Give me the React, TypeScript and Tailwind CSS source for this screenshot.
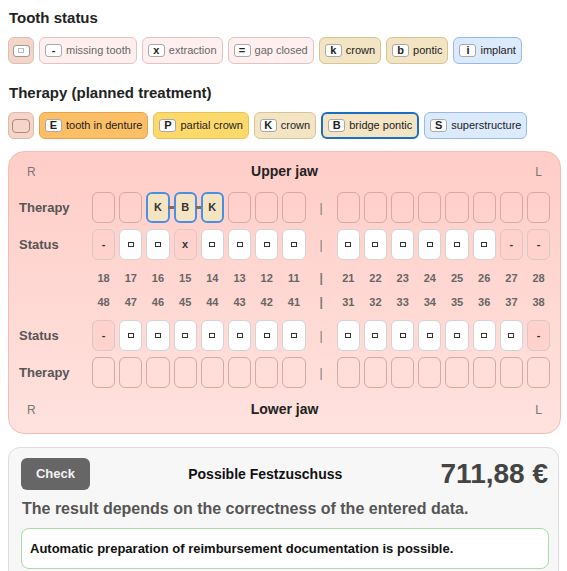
import React from "react";

type Chip = { key: string; label: string; tone: string; keyClass?: string; textClass?: string };

const statusChips: Chip[] = [
  { key: "-", label: "missing tooth", tone: "bg-[#fff0ef] border-[#e3c3c1]", textClass: "text-[#666]" },
  { key: "x", label: "extraction", tone: "bg-[#fff0ef] border-[#e3c3c1]", textClass: "text-[#666]" },
  { key: "=", label: "gap closed", tone: "bg-[#fff0ef] border-[#e3c3c1]", textClass: "text-[#666]" },
  { key: "k", label: "crown", tone: "bg-[#f3e4c3] border-[#d8c394]", textClass: "text-[#222]" },
  { key: "b", label: "pontic", tone: "bg-[#f3e4c3] border-[#d8c394]", textClass: "text-[#222]" },
  { key: "i", label: "implant", tone: "bg-[#dbeafd] border-[#94bbec]", textClass: "text-[#222]" },
];

const therapyChips: Chip[] = [
  { key: "E", label: "tooth in denture", tone: "bg-[#fdbf66] border-[#e2a54b]", textClass: "text-[#222]" },
  { key: "P", label: "partial crown", tone: "bg-[#fdd96c] border-[#e6c357]", textClass: "text-[#222]" },
  { key: "K", label: "crown", tone: "bg-[#f3e4c3] border-[#d8c394]", textClass: "text-[#222]" },
  { key: "B", label: "bridge pontic", tone: "bg-[#f3e4c3] border-[#1b6fc2] border-2", textClass: "text-[#222]" },
  { key: "S", label: "superstructure", tone: "bg-[#dbeafd] border-[#94bbec]", textClass: "text-[#222]" },
];

function LegendChip({ chip }: { chip: Chip }) {
  const bordered = chip.tone.includes("border-2") ? "" : "border";
  return (
    <div
      className={`h-[27px] flex items-center gap-[4px] pl-[5px] pr-[5px] rounded-[6px] ${bordered} ${chip.tone}`}
    >
      <span className="w-[17px] h-[13px] rounded-[3px] border border-[#a9a9a9] bg-white flex items-center justify-center text-[11px] leading-none font-bold text-[#222]">
        {chip.key}
      </span>
      <span className={`text-[11px] leading-none ${chip.textClass}`}>{chip.label}</span>
    </div>
  );
}

function TinySquare() {
  return <span className="block w-[6px] h-[5px] border border-[#333] bg-white" />;
}

type StatusKind = "sq" | "-" | "x";

function StatusBox({ kind }: { kind: StatusKind }) {
  if (kind === "sq") {
    return (
      <div className="h-[31px] rounded-[6px] border border-[#d3d3d3] bg-white flex items-center justify-center">
        <TinySquare />
      </div>
    );
  }
  return (
    <div className="h-[31px] rounded-[6px] border border-[#d8c8c6] bg-[#ffd2cd] flex items-center justify-center text-[11px] font-bold text-[#333]">
      {kind}
    </div>
  );
}

type TherapyCell = { code?: string; bridgeRight?: boolean };

function TherapyBox({ cell }: { cell: TherapyCell }) {
  if (!cell.code) {
    return <div className="h-[31px] rounded-[6px] border border-[#d6aaa4]" />;
  }
  return (
    <div className="relative h-[31px]">
      <div className="h-[31px] rounded-[6px] border-2 border-[#4a90e2] bg-[#f4e4c2] flex items-center justify-center text-[11px] font-bold text-[#333]">
        {cell.code}
      </div>
      {cell.bridgeRight && (
        <span className="absolute top-[14px] left-[22px] w-[7px] h-[3px] bg-[#7f6e5e]" />
      )}
    </div>
  );
}

function Separator({ bold }: { bold?: boolean }) {
  return (
    <div className={`flex items-center justify-center text-[12px] text-[#777] ${bold ? "font-bold" : ""}`}>|</div>
  );
}

const rowGrid = "grid grid-cols-[69px_repeat(17,23.2px)] gap-x-[4px]";

function RowLabel({ text }: { text: string }) {
  return <div className="flex items-center text-[13px] font-bold text-[#555]">{text}</div>;
}

function StatusRow({ left, right }: { left: StatusKind[]; right: StatusKind[] }) {
  return (
    <div className={rowGrid}>
      <RowLabel text="Status" />
      {left.map((k, i) => (
        <StatusBox key={`l${i}`} kind={k} />
      ))}
      <Separator />
      {right.map((k, i) => (
        <StatusBox key={`r${i}`} kind={k} />
      ))}
    </div>
  );
}

function TherapyRow({ left, right }: { left: TherapyCell[]; right: TherapyCell[] }) {
  return (
    <div className={rowGrid}>
      <RowLabel text="Therapy" />
      {left.map((c, i) => (
        <TherapyBox key={`l${i}`} cell={c} />
      ))}
      <Separator />
      {right.map((c, i) => (
        <TherapyBox key={`r${i}`} cell={c} />
      ))}
    </div>
  );
}

function NumberRow({ left, right }: { left: number[]; right: number[] }) {
  return (
    <div className={`${rowGrid} h-[24px]`}>
      <div />
      {left.map((n) => (
        <div key={n} className="flex items-center justify-center text-[11px] font-bold text-[#666]">
          {n}
        </div>
      ))}
      <Separator bold />
      {right.map((n) => (
        <div key={n} className="flex items-center justify-center text-[11px] font-bold text-[#666]">
          {n}
        </div>
      ))}
    </div>
  );
}

function JawHeader({ title }: { title: string }) {
  return (
    <div className="grid grid-cols-3 items-center h-[20px] px-[8px]">
      <span className="text-[12px] text-[#777]">R</span>
      <span className="text-center text-[14px] font-bold text-[#222]">{title}</span>
      <span className="text-right text-[12px] text-[#777]">L</span>
    </div>
  );
}

const empty8: TherapyCell[] = Array.from({ length: 8 }, () => ({}));

export default function App() {
  const upperTherapyLeft: TherapyCell[] = [
    {},
    {},
    { code: "K", bridgeRight: true },
    { code: "B", bridgeRight: true },
    { code: "K" },
    {},
    {},
    {},
  ];

  return (
    <div className="w-[567px] h-[571px] overflow-hidden bg-white px-2 pt-2 font-['Liberation_Sans',Arial,sans-serif]">
      <h2 className="h-[20px] flex items-center pl-[1px] text-[15px] font-bold text-[#222]">Tooth status</h2>
      <div className="mt-[9px] flex gap-[5px]">
        <div className="w-[26px] h-[27px] rounded-[6px] border border-[#d8c0b6] bg-[#f5d5c8] flex items-center justify-center">
          <span className="w-[17px] h-[12px] rounded-[3px] border border-[#9a9a9a] bg-white flex items-center justify-center">
            <span className="block w-[6px] h-[5px] border border-[#bbb]" />
          </span>
        </div>
        {statusChips.map((c) => (
          <LegendChip key={c.label} chip={c} />
        ))}
      </div>

      <h2 className="mt-[19px] h-[20px] flex items-center pl-[1px] text-[15px] font-bold text-[#222]">
        Therapy (planned treatment)
      </h2>
      <div className="mt-[9px] flex gap-[5px]">
        <div className="w-[26px] h-[27px] rounded-[6px] border border-[#d8bcb2] bg-[#f6d4c7] flex items-center justify-center">
          <span className="w-[18px] h-[14px] rounded-[4px] border-[1.5px] border-[#a88a86]" />
        </div>
        {therapyChips.map((c) => (
          <LegendChip key={c.label} chip={c} />
        ))}
      </div>

      <div className="mt-[12px] w-[553px] rounded-[16px] border border-[#f2bdb6] bg-gradient-to-b from-[#ffcdc7] to-[#ffe2de] px-[10px] pt-[9px] pb-[14px]">
        <JawHeader title="Upper jaw" />
        <div className="mt-[11px]">
          <TherapyRow left={upperTherapyLeft} right={empty8} />
        </div>
        <div className="mt-[6px]">
          <StatusRow
            left={["-", "sq", "sq", "x", "sq", "sq", "sq", "sq"]}
            right={["sq", "sq", "sq", "sq", "sq", "sq", "-", "-"]}
          />
        </div>
        <div className="mt-[6px]">
          <NumberRow left={[18, 17, 16, 15, 14, 13, 12, 11]} right={[21, 22, 23, 24, 25, 26, 27, 28]} />
          <NumberRow left={[48, 47, 46, 45, 44, 43, 42, 41]} right={[31, 32, 33, 34, 35, 36, 37, 38]} />
        </div>
        <div className="mt-[6px]">
          <StatusRow
            left={["-", "sq", "sq", "sq", "sq", "sq", "sq", "sq"]}
            right={["sq", "sq", "sq", "sq", "sq", "sq", "sq", "-"]}
          />
        </div>
        <div className="mt-[6px]">
          <TherapyRow left={empty8} right={empty8} />
        </div>
        <div className="mt-[11px]">
          <JawHeader title="Lower jaw" />
        </div>
      </div>

      <div className="mt-[13px] w-[551px] rounded-[12px] border border-[#dcdcdc] bg-[#f7f7f7] pl-[12px] pr-[9px] pt-[10px] pb-[12px]">
        <div className="flex items-center h-[32px]">
          <button className="w-[69px] h-[32px] rounded-[6px] bg-[#666] text-[13px] font-bold text-[#f2f2f2]">
            Check
          </button>
          <div className="flex-1 text-center text-[14px] font-bold text-[#111]">Possible Festzuschuss</div>
          <div className="text-[28px] font-bold text-[#444] leading-none pr-[1px]">711,88 €</div>
        </div>
        <p className="mt-[8px] h-[22px] flex items-center pl-[1px] text-[16px] font-bold text-[#555]">
          The result depends on the correctness of the entered data.
        </p>
        <div className="mt-[8px] h-[41px] rounded-[8px] border border-[#a9dca9] bg-white flex items-center pl-[8px] text-[13px] font-bold text-[#111]">
          Automatic preparation of reimbursement documentation is possible.
        </div>
      </div>
    </div>
  );
}
